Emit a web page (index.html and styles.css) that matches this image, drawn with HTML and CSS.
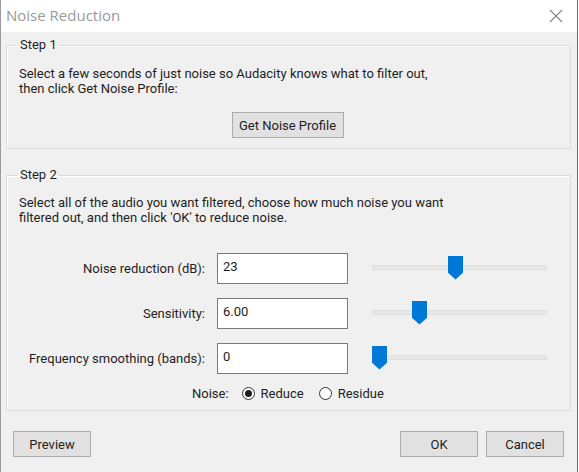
FILE: index.html
```html
<!DOCTYPE html>
<html lang="en">

<head>
    <meta charset="UTF-8">
    <title>Noise Reduction</title>
    <link rel="stylesheet" href="styles.css">
</head>

<body>
    <div class="dialog">
        <div class="titlebar">
            <span class="title">Noise Reduction</span>
            <svg class="close" width="14" height="14" viewBox="0 0 14 14">
                <path d="M1 1 L13 13 M13 1 L1 13" stroke="#8a8a8a" stroke-width="1.2" fill="none" />
            </svg>
        </div>

        <div class="content">
            <fieldset class="group step-one">
                <legend>Step 1</legend>
                <p>Select a few seconds of just noise so Audacity knows what to filter out,<br>then click Get Noise Profile:</p>
                <div class="center-row">
                    <button class="btn profile-btn">Get Noise Profile</button>
                </div>
            </fieldset>

            <fieldset class="group step-two">
                <legend>Step 2</legend>
                <p>Select all of the audio you want filtered, choose how much noise you want<br>filtered out, and then click 'OK' to reduce noise.</p>

                <div class="params">
                    <label class="param-label">Noise reduction (dB):</label>
                    <div class="field">23</div>
                    <div class="slider">
                        <div class="track"></div>
                        <div class="thumb" style="left: 76px"></div>
                    </div>

                    <label class="param-label">Sensitivity:</label>
                    <div class="field">6.00</div>
                    <div class="slider">
                        <div class="track"></div>
                        <div class="thumb" style="left: 40px"></div>
                    </div>

                    <label class="param-label">Frequency smoothing (bands):</label>
                    <div class="field">0</div>
                    <div class="slider">
                        <div class="track"></div>
                        <div class="thumb" style="left: 0px"></div>
                    </div>
                </div>

                <div class="noise-row">
                    <span class="noise-label">Noise:</span>
                    <span class="radio checked"></span>
                    <span class="radio-text">Reduce</span>
                    <span class="radio"></span>
                    <span class="radio-text">Residue</span>
                </div>
            </fieldset>

            <div class="footer">
                <button class="btn">Preview</button>
                <div class="footer-right">
                    <button class="btn">OK</button>
                    <button class="btn">Cancel</button>
                </div>
            </div>
        </div>
    </div>
</body>

</html>
```

FILE: styles.css
```css
* {
    margin: 0;
    padding: 0;
    box-sizing: border-box;
}

html,
body {
    width: 579px;
    height: 472px;
    overflow: hidden;
    background: #ffffff;
}

body {
    font-family: Roboto, "Open Sans", sans-serif;
    font-size: 13px;
    color: #1e1e1e;
}

.dialog {
    width: 578px;
    height: 472px;
    border-left: 1px solid #9a9a9a;
    border-right: 1px solid #6a6a6a;
    background: #f0f0f0;
    display: flex;
    flex-direction: column;
}

.titlebar {
    height: 32px;
    background: #ffffff;
    display: flex;
    align-items: center;
    justify-content: space-between;
    padding: 0 14px 2px 5px;
}

.title {
    font-family: "Open Sans", sans-serif;
    font-size: 15px;
    color: #9a9a9a;
}

.close {
    margin-top: 2px;
}

.content {
    padding: 5px 6px 0 5px;
    display: flex;
    flex-direction: column;
}

.group {
    border: 1px solid #dcdcdc;
    border-radius: 0;
    padding: 0 12px 0 12px;
    box-shadow: inset 1px 1px 0 #ffffff;
}

.group legend {
    padding: 0 2px;
    margin-left: -1px;
    line-height: 16px;
}

.group p {
    line-height: 15px;
    margin-top: 13px;
}

.step-one {
    height: 112px;
}

.center-row {
    display: flex;
    justify-content: center;
    margin-top: 16px;
    padding-right: 2px;
}

.btn {
    font-family: inherit;
    font-size: 13px;
    color: #1e1e1e;
    background: #e1e1e1;
    border: 1px solid #adadad;
    height: 26px;
    padding: 0 6px;
    white-space: nowrap;
}

.profile-btn {
    width: 112px;
}

.step-two {
    margin-top: 18px;
    height: 244px;
}

.step-two p {
    margin-top: 12px;
}

.params {
    display: grid;
    grid-template-columns: 186px 131px 187px;
    column-gap: 12px;
    row-gap: 14px;
    align-items: center;
    margin-top: 28px;
}

.params .slider {
    margin-left: 12px;
}

.param-label {
    text-align: right;
}

.field {
    height: 31px;
    background: #ffffff;
    border: 1px solid #7a7a7a;
    padding: 5px 5px;
    line-height: 15px;
}

.slider {
    position: relative;
    height: 26px;
}

.track {
    position: absolute;
    left: 0;
    right: 0;
    top: 9px;
    height: 5px;
    background: #e7e7e7;
    border: 1px solid #dedede;
}

.thumb {
    position: absolute;
    top: 0;
    width: 15px;
    height: 24px;
    background: #0078d7;
    clip-path: polygon(0 0, 100% 0, 100% 72%, 50% 100%, 0 72%);
}

.noise-row {
    display: flex;
    align-items: center;
    margin-top: 12px;
    padding-left: 173px;
}

.noise-label {
    margin-right: 13px;
}

.radio {
    width: 13px;
    height: 13px;
    border: 1px solid #333333;
    border-radius: 50%;
    background: #ffffff;
    display: inline-flex;
    align-items: center;
    justify-content: center;
    margin-right: 6px;
}

.radio.checked::after {
    content: "";
    width: 7px;
    height: 7px;
    border-radius: 50%;
    background: #1e1e1e;
}

.radio-text {
    margin-right: 15px;
}

.footer {
    display: flex;
    justify-content: space-between;
    margin-top: 20px;
    padding: 0 7px 0 7px;
}

.footer .btn {
    width: 78px;
    height: 26px;
}

.footer-right {
    display: flex;
    gap: 8px;
}
```
